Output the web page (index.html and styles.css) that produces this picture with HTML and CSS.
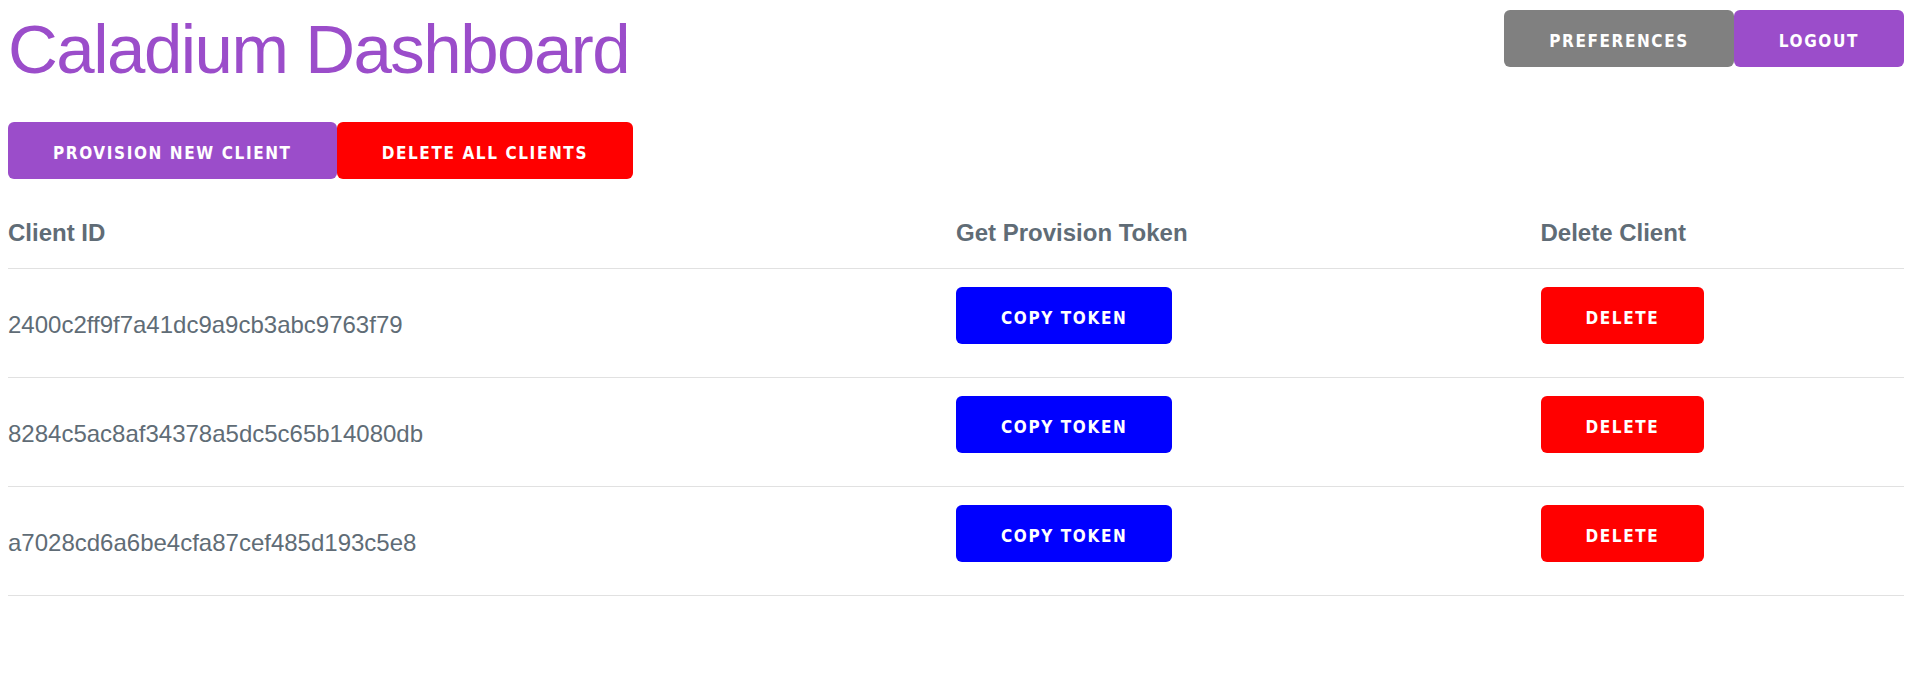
FILE: index.html
```html
<!DOCTYPE html>
<html lang="en">
<head>
<meta charset="utf-8">
<title>Caladium Dashboard</title>
<link rel="stylesheet" href="styles.css">
</head>
<body>
<div class="page">
  <header class="topbar">
    <div class="intro">
      <h1 class="title">Caladium Dashboard</h1>
      <div class="actions">
        <button class="btn btn-purple">Provision New Client</button>
        <button class="btn btn-red">Delete All Clients</button>
      </div>
    </div>
    <nav class="nav">
      <button class="btn btn-grey">Preferences</button>
      <button class="btn btn-purple">Logout</button>
    </nav>
  </header>

  <table class="clients">
    <colgroup>
      <col class="col-id">
      <col class="col-token">
      <col class="col-delete">
    </colgroup>
    <thead>
      <tr>
        <th>Client ID</th>
        <th>Get Provision Token</th>
        <th>Delete Client</th>
      </tr>
    </thead>
    <tbody>
      <tr>
        <td class="id-cell">2400c2ff9f7a41dc9a9cb3abc9763f79</td>
        <td><button class="btn btn-blue">Copy Token</button></td>
        <td><button class="btn btn-red">Delete</button></td>
      </tr>
      <tr>
        <td class="id-cell">8284c5ac8af34378a5dc5c65b14080db</td>
        <td><button class="btn btn-blue">Copy Token</button></td>
        <td><button class="btn btn-red">Delete</button></td>
      </tr>
      <tr>
        <td class="id-cell">a7028cd6a6be4cfa87cef485d193c5e8</td>
        <td><button class="btn btn-blue">Copy Token</button></td>
        <td><button class="btn btn-red">Delete</button></td>
      </tr>
    </tbody>
  </table>
</div>
</body>
</html>
```

FILE: styles.css
```css
* {
  box-sizing: border-box;
}

html, body {
  margin: 0;
  padding: 0;
  background: #ffffff;
}

body {
  font-family: "Liberation Sans", Arial, sans-serif;
  color: #606c76;
  font-size: 24px;
  line-height: 1.6;
}

.page {
  padding: 9px 10px 0 8px;
}

.topbar {
  display: flex;
  justify-content: space-between;
  align-items: flex-start;
}

.intro {
  display: flex;
  flex-direction: column;
  align-items: flex-start;
}

.title {
  margin: 0 0 30px 0;
  font-family: "Liberation Sans", Arial, sans-serif;
  font-weight: 400;
  font-size: 69px;
  line-height: 82.8px;
  letter-spacing: -1.5px;
  color: #9b4dca;
}

.actions {
  display: flex;
  margin-bottom: 15px;
}

.nav {
  display: flex;
  margin-top: 1px;
}

.btn {
  display: inline-block;
  height: 57px;
  padding: 6px 45px 0;
  line-height: 51px;
  border: none;
  border-radius: 6px;
  font-family: "DejaVu Sans Condensed", "DejaVu Sans", Verdana, sans-serif;
  font-weight: 700;
  font-size: 17px;
  letter-spacing: 1.6px;
  text-transform: uppercase;
  white-space: nowrap;
  color: #ffffff;
  cursor: pointer;
  vertical-align: top;
}

.btn-purple { background: #9b4dca; }
.btn-red { background: #ff0000; }
.btn-blue { background: #0000ff; }
.btn-grey { background: #808080; }

.clients {
  width: 100%;
  border-collapse: collapse;
  border-spacing: 0;
  table-layout: fixed;
}

.col-id { width: 925.5px; }
.col-token { width: 584.5px; }
.col-delete { width: 386px; }

.clients th,
.clients td {
  padding: 18px 22.5px;
  border-bottom: 1px solid #e1e1e1;
  text-align: left;
  vertical-align: middle;
}

.clients th {
  padding-top: 20px;
  padding-bottom: 16px;
  font-weight: 700;
  font-size: 24px;
  line-height: 38.4px;
}

.clients td {
  font-weight: 400;
  font-size: 24px;
  line-height: 38.4px;
}

.clients td.id-cell {
  padding-top: 20px;
  padding-bottom: 16px;
}

.clients th:first-child,
.clients td:first-child {
  padding-left: 0;
}

.clients th:last-child,
.clients td:last-child {
  padding-right: 0;
}

.clients td .btn {
  margin-bottom: 15px;
}
```
